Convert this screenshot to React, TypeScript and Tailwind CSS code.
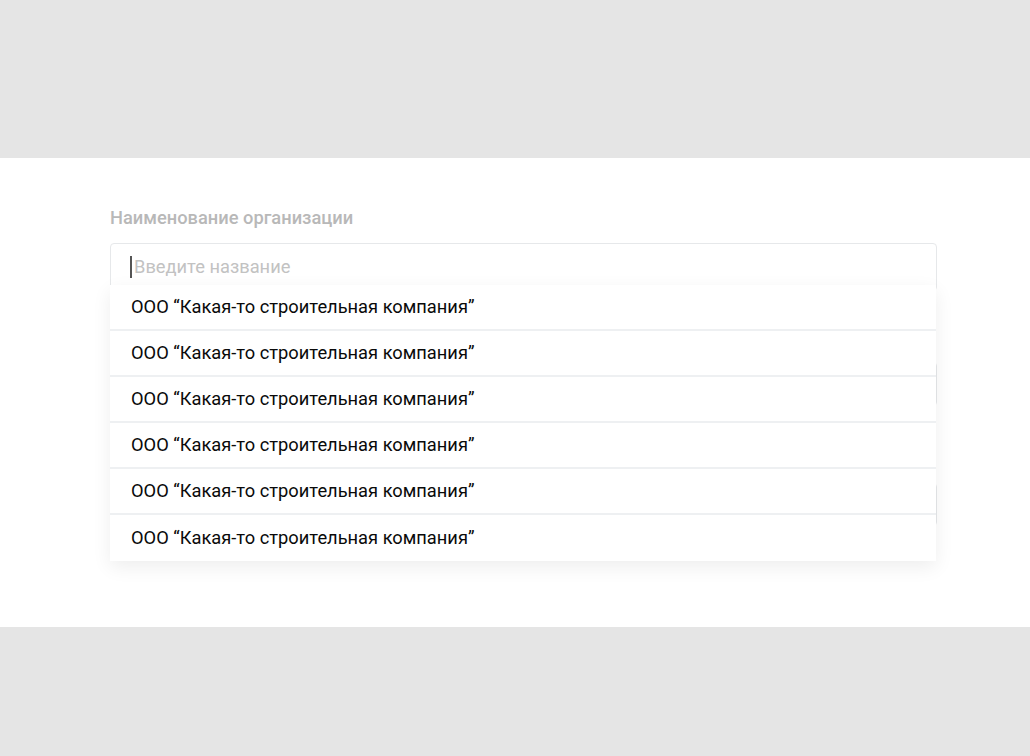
import React from "react";

const items = Array.from({ length: 6 }, () => "ООО “Какая-то строительная компания”");

export default function App() {
  return (
    <div className="w-[1030px] h-[756px] bg-[#e5e5e5] flex flex-col" style={{ fontFamily: "Roboto, 'Liberation Sans', sans-serif" }}>
      <div className="h-[158px] shrink-0" />
      <div className="h-[469px] bg-white px-[110px] shrink-0">
        <div className="pt-[49px] w-[827px]">
          <div className="text-[18.3px] leading-[22px] font-medium text-[#b8b8b8]">Наименование организации</div>
          <div className="relative mt-[14px]">
            <div className="h-[48px] border border-[#e6e8ea] rounded-[4px] flex items-center pl-[19px]">
              <span className="w-[2px] h-[22px] bg-[#555] mr-[2px]" />
              <span className="text-[18.3px] text-[#c2c2c2]">Введите название</span>
            </div>
            <div className="absolute left-0 right-[1px] top-[42px] bg-white shadow-[0_6px_18px_rgba(0,0,0,0.07)] z-10">
              {items.map((t, i) => (
                <div
                  key={i}
                  className={`h-[46px] flex items-center pl-[21px] text-[18.3px] text-[#0a0a0a] ${i < items.length - 1 ? "border-b-2 border-[#eef0f2]" : ""}`}
                >
                  {t}
                </div>
              ))}
            </div>
          </div>
          <div className="mt-[71px] h-[44px] border border-[#e6e8ea] rounded-[4px]" />
          <div className="mt-[77px] h-[43px] border border-[#e6e8ea] rounded-[4px]" />
        </div>
      </div>
      <div className="flex-1" />
    </div>
  );
}
